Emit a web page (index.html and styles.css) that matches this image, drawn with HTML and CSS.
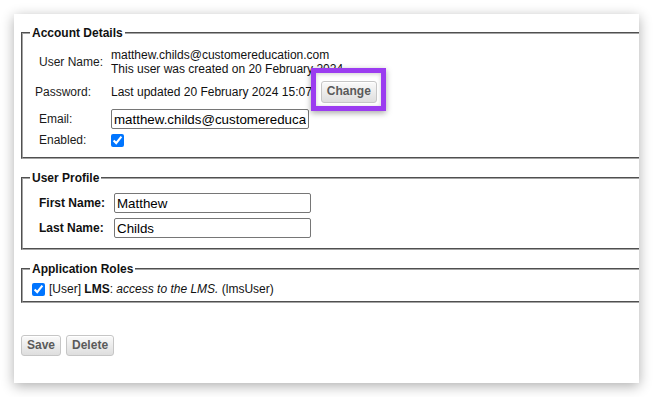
FILE: index.html
```html
<!DOCTYPE html>
<html lang="en">
<head>
<meta charset="utf-8">
<title>Account Details</title>
<link rel="stylesheet" href="styles.css">
</head>
<body>
<div class="panel">
  <fieldset class="group group-account">
    <legend>Account Details</legend>
    <div class="form-grid">
      <div class="lbl lbl-tall">User Name:</div>
      <div class="val val-two">matthew.childs@customereducation.com<br>This user was created on 20 February 2024</div>
      <div class="lbl lbl-pw">Password:</div>
      <div class="val val-pw">Last updated 20 February 2024 15:07<span class="highlight"><button class="btn btn-change" type="button">Change</button></span></div>
      <div class="lbl lbl-email">Email:</div>
      <div class="val val-email"><input class="field field-email" type="text" value="matthew.childs@customereducation.com"></div>
      <div class="lbl lbl-enabled">Enabled:</div>
      <div class="val val-enabled"><input class="check" type="checkbox" checked></div>
    </div>
  </fieldset>

  <fieldset class="group group-profile">
    <legend>User Profile</legend>
    <div class="profile-grid">
      <div class="plbl">First Name:</div>
      <div><input class="field field-name" type="text" value="Matthew"></div>
      <div class="plbl">Last Name:</div>
      <div><input class="field field-name" type="text" value="Childs"></div>
    </div>
  </fieldset>

  <fieldset class="group group-roles">
    <legend>Application Roles</legend>
    <label class="role">
      <input class="check check-role" type="checkbox" checked>
      <span>[User] <b>LMS</b>: <i>access to the LMS.</i> (lmsUser)</span>
    </label>
  </fieldset>

  <div class="actions">
    <button class="btn" type="button">Save</button>
    <button class="btn" type="button">Delete</button>
  </div>
</div>
</body>
</html>
```

FILE: styles.css
```css
* { box-sizing: border-box; }

html, body {
  margin: 0;
  padding: 0;
  background: #ffffff;
}

body {
  padding: 14px;
  font-family: "Liberation Sans", Arial, sans-serif;
  font-size: 12px;
  color: #111;
}

.panel {
  width: 625px;
  height: 369px;
  background: #ffffff;
  box-shadow: 0 3px 12px rgba(0, 0, 0, 0.32);
  overflow: hidden;
  padding: 12px 0 0 7px;
}

.group {
  margin: 0 -20px 12px 0;
  border: 2px groove #a4a4a4;
  padding: 0 7px;
  min-width: 0;
}

.group legend {
  font-weight: bold;
  font-size: 12px;
  line-height: 14px;
  padding: 0 2px;
  color: #111;
}

.form-grid {
  display: grid;
  grid-template-columns: 76px 1fr;
  grid-template-rows: 28px 31px 24px 18px;
  align-items: center;
  padding: 8px 0 8px 5px;
}

.lbl { padding-left: 4px; color: #1a1a1a; line-height: 14px; }
.lbl-pw { padding-left: 0; }
.val { line-height: 14px; color: #111; }

.val-pw {
  display: flex;
  align-items: center;
}

.highlight {
  position: relative;
  margin-left: 9px;
  display: inline-flex;
}

.highlight::before {
  content: "";
  position: absolute;
  left: -10px;
  top: -13px;
  right: -9px;
  bottom: -8px;
  border: 5px solid #9b3cf0;
  box-shadow: 0 2px 6px rgba(0, 0, 0, 0.35), inset 0 1px 4px rgba(0, 0, 0, 0.2);
}

.field {
  height: 20px;
  border: 1px solid #767676;
  border-radius: 2px;
  padding: 0 2px;
  font-family: "Liberation Sans", Arial, sans-serif;
  font-size: 13.33px;
  color: #000;
  background: #fff;
  margin: 0;
}

.field-email { width: 198px; display: block; }

.check {
  width: 13px;
  height: 13px;
  margin: 0;
  display: block;
  accent-color: #0075ff;
}

.profile-grid {
  display: grid;
  grid-template-columns: 75px 1fr;
  row-gap: 5px;
  align-items: center;
  padding: 8px 0 10px 9px;
}

.plbl { font-weight: bold; color: #111; }

.field-name { width: 197px; display: block; }

.group-roles { padding-top: 6px; padding-bottom: 5px; }

.role {
  display: flex;
  align-items: center;
  gap: 4px;
  line-height: 14px;
  padding-left: 2px;
}

.actions {
  display: flex;
  gap: 5px;
  margin-top: 32px;
}

.btn {
  height: 21px;
  padding: 0 5px;
  font-family: "Liberation Sans", Arial, sans-serif;
  font-size: 12px;
  font-weight: bold;
  color: #5a5a5a;
  background: linear-gradient(#fafafa, #dedede);
  border: 1px solid #c6c6c6;
  border-radius: 3px;
  box-shadow: inset 0 1px 0 #ffffff;
  line-height: 19px;
}

.btn-change {
  width: 56px;
  height: 22px;
}
```
